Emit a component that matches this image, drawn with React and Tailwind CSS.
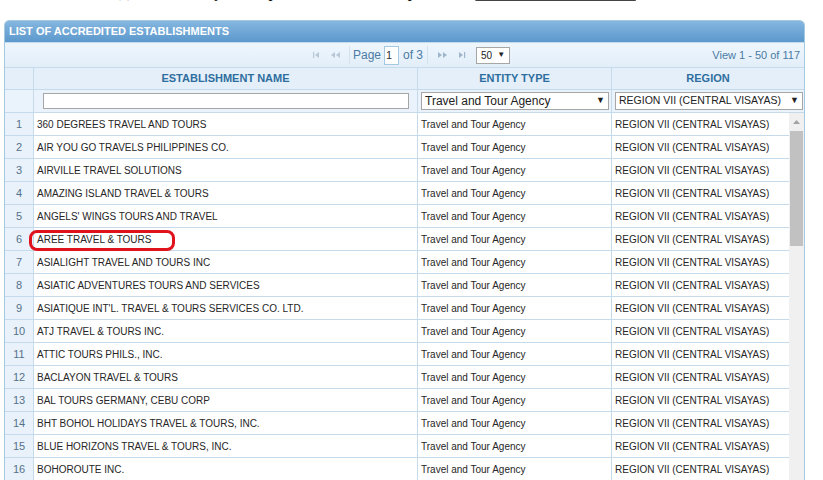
import React from "react";

const rows = [
  "360 DEGREES TRAVEL AND TOURS",
  "AIR YOU GO TRAVELS PHILIPPINES CO.",
  "AIRVILLE TRAVEL SOLUTIONS",
  "AMAZING ISLAND TRAVEL & TOURS",
  "ANGELS' WINGS TOURS AND TRAVEL",
  "AREE TRAVEL & TOURS",
  "ASIALIGHT TRAVEL AND TOURS INC",
  "ASIATIC ADVENTURES TOURS AND SERVICES",
  "ASIATIQUE INT'L. TRAVEL & TOURS SERVICES CO. LTD.",
  "ATJ TRAVEL & TOURS INC.",
  "ATTIC TOURS PHILS., INC.",
  "BACLAYON TRAVEL & TOURS",
  "BAL TOURS GERMANY, CEBU CORP",
  "BHT BOHOL HOLIDAYS TRAVEL & TOURS, INC.",
  "BLUE HORIZONS TRAVEL & TOURS, INC.",
  "BOHOROUTE INC.",
];

function PagerIcon({ dir, last }) {
  // little grey jqGrid-style pager arrows
  return (
    <svg width="14" height="8" viewBox="0 0 14 8" className="shrink-0">
      {dir === "left" ? (
        <>
          {last ? <rect x="2" y="1" width="1.2" height="6" fill="#b7c7d6" /> : null}
          <polygon points={last ? "4,4 8,1 8,7" : "2,4 6,1 6,7"} fill="#b7c7d6" />
          {!last ? <polygon points="7,4 11,1 11,7" fill="#b7c7d6" /> : null}
        </>
      ) : (
        <>
          <polygon points={last ? "3,1 7,4 3,7" : "2,1 6,4 2,7"} fill="#9fb6cc" />
          {last ? <rect x="8" y="1" width="1.2" height="6" fill="#9fb6cc" /> : <polygon points="7,1 11,4 7,7" fill="#9fb6cc" />}
        </>
      )}
    </svg>
  );
}

export default function App() {
  return (
    <div className="w-[823px] h-[480px] overflow-hidden bg-white text-[10px] text-[#262626]" style={{ fontFamily: '"Liberation Sans", Arial, sans-serif' }}>
      {/* intro line, scrolled mostly out of view */}
      <div className="h-[20px] overflow-hidden">
        <p className="-mt-[16px] -ml-[86px] text-[16px] leading-none text-black whitespace-nowrap" style={{ fontFamily: '"Liberation Serif", serif' }}>
          Listed below, the establishment(s) accredited by the Department of Tourism; please see{" "}
          <span className="underline underline-offset-[3px] decoration-[#444]">Accreditation Guidelines</span>
        </p>
      </div>

      {/* grid panel */}
      <div className="ml-[4px] w-[801px] border border-[#a6c9e2] rounded-t-[5px] overflow-hidden">
        <div className="h-[21px] bg-gradient-to-b from-[#85b7e0] to-[#5c98cc] text-white font-bold text-[11px] pl-[4px] flex items-center">
          LIST OF ACCREDITED ESTABLISHMENTS
        </div>

        {/* pager */}
        <div className="h-[25px] bg-gradient-to-b from-[#eef6fd] to-[#e2eef9] border-t border-[#c5dbec] flex items-center relative">
          <div className="absolute left-[306px] top-0 h-full flex items-center text-[#4b7aa3]">
            <PagerIcon dir="left" last />
            <span className="w-[4px]" />
            <PagerIcon dir="left" />
            <span className="ml-[6px] mr-[3px] w-px h-[18px] bg-[#d2e2ef]" />
            <span className="text-[12px]">Page</span>
            <span className="ml-[3px] w-[15px] h-[19px] bg-white border border-[#a6c9e2] text-[11px] text-[#333] flex items-center pl-[1px]">1</span>
            <span className="ml-[4px] text-[12px]">of 3</span>
            <span className="ml-[4px] mr-[8px] w-px h-[18px] bg-[#d2e2ef]" />
            <PagerIcon dir="right" />
            <span className="w-[6px]" />
            <PagerIcon dir="right" last />
            <span className="ml-[6px] w-[34px] h-[17px] bg-white border border-[#a6a6a6] flex items-center justify-between px-[4px] text-[10px] text-[#222]">
              50 <span className="text-[8px]">▼</span>
            </span>
          </div>
          <span className="ml-auto mr-[4px] text-[11px] text-[#4b7aa3]">View 1 - 50 of 117</span>
        </div>

        {/* column headers */}
        <div className="h-[23px] flex bg-[#e4eff9] border-t border-b border-[#c5dbec] font-bold text-[11px] text-[#2e6e9e]">
          <div className="w-[29px] border-r border-[#c5dbec]" />
          <div className="w-[384px] border-r border-[#c5dbec] flex items-center justify-center">ESTABLISHMENT NAME</div>
          <div className="w-[194px] border-r border-[#c5dbec] flex items-center justify-center">ENTITY TYPE</div>
          <div className="flex-1 flex items-center justify-center">REGION</div>
        </div>

        {/* filter toolbar */}
        <div className="h-[23px] flex bg-[#eaf3fb] border-b border-[#c5dbec]">
          <div className="w-[29px] border-r border-[#c5dbec]" />
          <div className="w-[384px] border-r border-[#c5dbec] flex items-center pl-[9px] pr-[8px]">
            <div className="w-full h-[16px] bg-white border border-[#a6a6a6]" />
          </div>
          <div className="w-[194px] border-r border-[#c5dbec] flex items-center pl-[3px] pr-[2px]">
            <div className="w-full h-[18px] bg-white border border-[#a6a6a6] flex items-center justify-between px-[3px] text-[12px] text-[#222]">
              Travel and Tour Agency <span className="text-[9px]">▼</span>
            </div>
          </div>
          <div className="flex-1 flex items-center pl-[3px] pr-[1px]">
            <div className="w-full h-[18px] bg-white border border-[#a6a6a6] flex items-center justify-between px-[3px] text-[10.5px] text-[#222]">
              REGION VII (CENTRAL VISAYAS) <span className="text-[9px]">▼</span>
            </div>
          </div>
        </div>

        {/* body with scrollbar */}
        <div className="flex">
          <div className="w-[784px]">
            {rows.map((name, i) => (
              <div key={name} className="h-[23px] flex border-b border-[#c5dbec]">
                <div className="w-[29px] bg-[#e9f2fa] border-r border-[#c5dbec] flex items-center justify-center text-[11px] text-[#56718a]">{i + 1}</div>
                <div className="w-[384px] border-r border-[#c5dbec] flex items-center pl-[3px] relative">
                  {name}
                  {name === "AREE TRAVEL & TOURS" ? (
                    <div className="absolute left-[-5px] top-[2px] w-[146px] h-[21px] border-[3px] border-[#e0121c] rounded-[8px]" />
                  ) : null}
                </div>
                <div className="w-[194px] border-r border-[#c5dbec] flex items-center pl-[3px]">Travel and Tour Agency</div>
                <div className="flex-1 flex items-center pl-[3px]">REGION VII (CENTRAL VISAYAS)</div>
              </div>
            ))}
          </div>
          <div className="w-[15px] bg-[#f0f0f0] flex flex-col items-center">
            <div className="h-[18px] flex items-center justify-center">
              <svg width="7" height="4" viewBox="0 0 7 4"><polygon points="0,4 3.5,0 7,4" fill="#a3a3a3" /></svg>
            </div>
            <div className="w-[13px] h-[115px] bg-[#c1c1c1]" />
          </div>
        </div>
      </div>
    </div>
  );
}
